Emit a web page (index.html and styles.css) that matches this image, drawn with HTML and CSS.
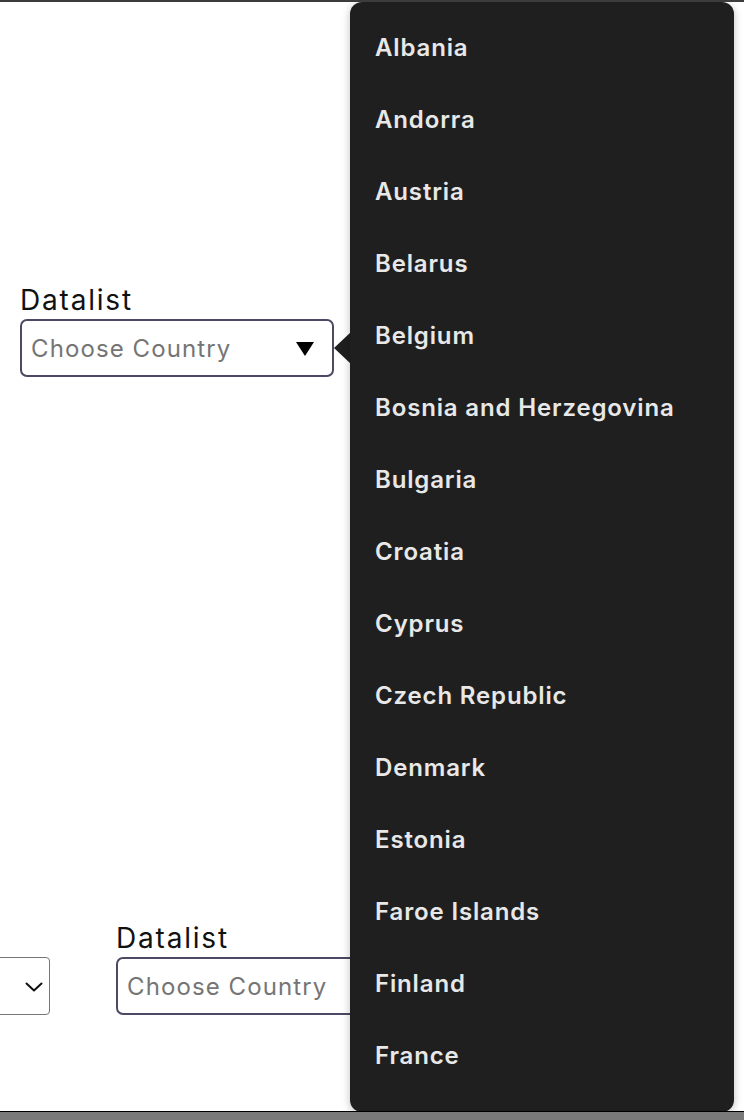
FILE: index.html
```html
<!DOCTYPE html>
<html>
<head>
<meta charset="utf-8">
<link rel="stylesheet" href="styles.css">
</head>
<body>
<div class="screen">
  <div class="topbar"></div>
  <main class="page">
    <section class="block block-top">
      <label class="label">Datalist</label>
      <div class="field">
        <span class="placeholder">Choose Country</span>
        <svg class="tri" width="18" height="14" viewBox="0 0 18 14"><polygon points="0,0 18,0 9,14" fill="#000"/></svg>
      </div>
    </section>
    <section class="row-bottom">
      <div class="select">
        <svg class="chev" width="18" height="10" viewBox="0 0 18 10"><polyline points="1.5,1.5 9,8.5 16.5,1.5" fill="none" stroke="#111" stroke-width="2" stroke-linecap="round" stroke-linejoin="round"/></svg>
      </div>
      <div class="block">
        <label class="label">Datalist</label>
        <div class="field">
          <span class="placeholder">Choose Country</span>
        </div>
      </div>
    </section>

    <div class="pointer"></div>
    <ul class="dropdown">
      <li>Albania</li>
      <li>Andorra</li>
      <li>Austria</li>
      <li>Belarus</li>
      <li>Belgium</li>
      <li>Bosnia and Herzegovina</li>
      <li>Bulgaria</li>
      <li>Croatia</li>
      <li>Cyprus</li>
      <li>Czech Republic</li>
      <li>Denmark</li>
      <li>Estonia</li>
      <li>Faroe Islands</li>
      <li>Finland</li>
      <li>France</li>
    </ul>
  </main>
  <div class="bottombar"></div>
</div>
</body>
</html>
```
FILE: styles.css
```css
* { box-sizing: border-box; }
html, body { margin: 0; padding: 0; }
body {
  width: 744px;
  height: 1120px;
  overflow: hidden;
  background: #fff;
  font-family: Inter, "Noto Sans", sans-serif;
}
.screen {
  display: flex;
  flex-direction: column;
  height: 1120px;
}
.topbar {
  height: 2px;
  background: #3c3c3c;
  flex: none;
}
.page {
  position: relative;
  flex: 1;
  overflow: hidden;
  padding: 282px 0 0 20px;
}
.bottombar {
  height: 9px;
  flex: none;
  background: #7a7a7a;
  border-top: 1px solid #000;
}
.block {
  display: flex;
  flex-direction: column;
  width: 314px;
  flex: none;
}
.label {
  font-size: 28px;
  line-height: 32px;
  color: #111;
  letter-spacing: 1.8px;
  margin-bottom: 3px;
}
.field {
  height: 58px;
  border: 2px solid #4d4863;
  border-radius: 7px;
  display: flex;
  align-items: center;
  justify-content: space-between;
  padding: 0 18px 0 9px;
  background: #fff;
}
.placeholder {
  font-size: 24px;
  color: #757575;
  letter-spacing: 1.1px;
  white-space: nowrap;
}
.tri { flex: none; margin-top: 2px; }
.row-bottom {
  display: flex;
  align-items: flex-end;
  gap: 66px;
  margin-top: 545px;
  margin-left: -220px;
}
.select {
  width: 250px;
  height: 58px;
  flex: none;
  border: 1.5px solid #767676;
  border-radius: 4px;
  display: flex;
  align-items: center;
  justify-content: flex-end;
  padding-right: 6px;
}
.chev { margin-top: 2px; }
.pointer {
  position: absolute;
  left: 334px;
  top: 330px;
  width: 0;
  height: 0;
  border-top: 16px solid transparent;
  border-bottom: 16px solid transparent;
  border-right: 17px solid #1f1f1f;
}
.dropdown {
  position: absolute;
  left: 350px;
  top: 0;
  width: 384px;
  height: 1110px;
  margin: 0;
  padding: 10px 0 0 0;
  list-style: none;
  background: #1f1f1f;
  border-radius: 12px;
  box-shadow: 0 2px 8px rgba(0,0,0,0.25);
  overflow: hidden;
}
.dropdown li {
  height: 72px;
  line-height: 72px;
  padding-left: 25px;
  font-size: 24px;
  font-weight: 600;
  letter-spacing: 0.85px;
  color: #e8e8e8;
  white-space: nowrap;
}
```
